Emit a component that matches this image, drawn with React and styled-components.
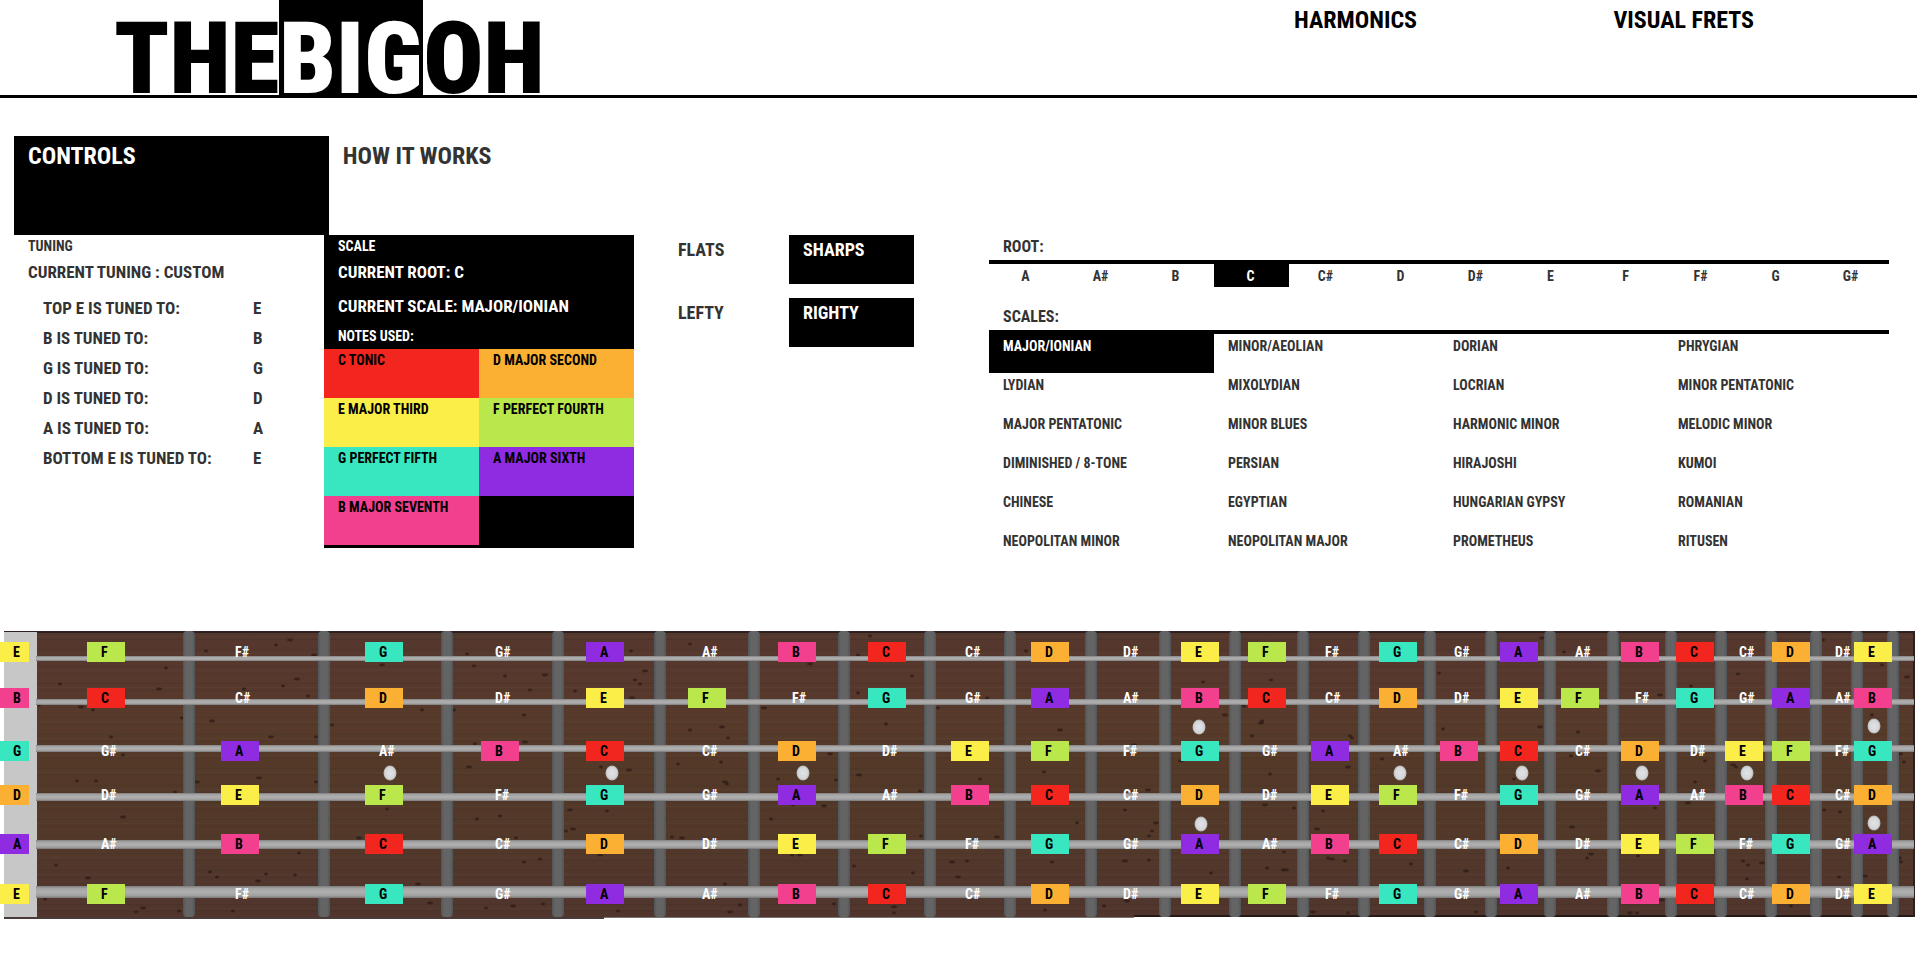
import React from "react";
import styled, { createGlobalStyle } from "styled-components";

const GlobalStyle = createGlobalStyle`
  *, *::before, *::after { box-sizing: border-box; }
  body {
    margin: 0;
    background: #fff;
    color: #333;
    font-family: "Roboto Condensed", "Liberation Sans Narrow", "Liberation Sans", sans-serif;
    font-weight: 700;
    overflow-x: hidden;
  }
  button {
    font: inherit;
    color: inherit;
    background: none;
    border: 0;
    padding: 0;
    margin: 0;
    text-align: left;
    cursor: pointer;
  }
  h1, h2, h3, p, ul, table { margin: 0; padding: 0; font-size: inherit; font-weight: inherit; }
  ul { list-style: none; }
`;

const CHROMATIC = ["A", "A#", "B", "C", "C#", "D", "D#", "E", "F", "F#", "G", "G#"];

const NOTE_COLORS = {
  C: "#f2261f",
  D: "#fbaf33",
  E: "#fcee49",
  F: "#bae74b",
  G: "#38e7bf",
  A: "#8f2be0",
  B: "#f2408f",
};

const SCALE_NOTES = [
  ["C", "TONIC"],
  ["D", "MAJOR SECOND"],
  ["E", "MAJOR THIRD"],
  ["F", "PERFECT FOURTH"],
  ["G", "PERFECT FIFTH"],
  ["A", "MAJOR SIXTH"],
  ["B", "MAJOR SEVENTH"],
];

const SCALES = [
  "MAJOR/IONIAN", "MINOR/AEOLIAN", "DORIAN", "PHRYGIAN",
  "LYDIAN", "MIXOLYDIAN", "LOCRIAN", "MINOR PENTATONIC",
  "MAJOR PENTATONIC", "MINOR BLUES", "HARMONIC MINOR", "MELODIC MINOR",
  "DIMINISHED / 8-TONE", "PERSIAN", "HIRAJOSHI", "KUMOI",
  "CHINESE", "EGYPTIAN", "HUNGARIAN GYPSY", "ROMANIAN",
  "NEOPOLITAN MINOR", "NEOPOLITAN MAJOR", "PROMETHEUS", "RITUSEN",
];

const TUNING = [
  ["TOP E", "E"],
  ["B", "B"],
  ["G", "G"],
  ["D", "D"],
  ["A", "A"],
  ["BOTTOM E", "E"],
];

/* Fretboard geometry, in units of a 1917 x 290 board. */
const BOARD_W = 1917;
const BOARD_H = 290;
const STRINGS = [
  { open: "E", top: 12, y: 26, h: 5 },
  { open: "B", top: 58, y: 69, h: 6 },
  { open: "G", top: 111, y: 115, h: 7 },
  { open: "D", top: 155, y: 163, h: 8 },
  { open: "A", top: 204, y: 210, h: 9 },
  { open: "E", top: 254, y: 256, h: 12 },
];
const NOTE_X = [
  0, 87, 221, 365, 481, 586, 688, 778, 868, 951, 1031, 1109, 1181,
  1248, 1311, 1379, 1440, 1500, 1561, 1621, 1676, 1725, 1772, 1821, 1854,
];
const FRET_X = [
  183, 318, 441, 552, 654, 748, 838, 924, 1004, 1085, 1159, 1229,
  1297, 1358, 1424, 1485, 1544, 1607, 1665, 1715, 1765, 1810, 1851, 1887,
];
const INLAYS = [
  [390, 143], [612, 143], [803, 143], [1199, 97], [1201, 194], [1400, 143],
  [1522, 143], [1642, 143], [1747, 143], [1874, 96], [1874, 193],
];
const SPECKS = [
  [290, 10], [276, 15], [206, 21], [314, 25], [166, 38], [60, 54], [159, 59], [244, 59], [283, 56], [297, 49],
  [308, 66], [39, 75], [81, 77], [93, 80], [182, 88], [212, 91], [332, 95], [111, 107], [271, 107], [316, 107],
  [123, 125], [259, 148], [96, 151], [77, 151], [197, 152], [316, 152], [175, 162], [123, 187], [387, 179], [477, 189],
  [359, 208], [299, 223], [56, 235], [88, 248], [210, 242], [217, 247], [258, 251], [266, 244], [295, 245], [418, 254],
  [45, 269], [136, 282], [143, 278], [179, 281], [233, 281], [430, 273], [467, 24], [474, 36], [382, 35], [422, 80],
  [454, 80], [469, 137], [475, 114], [505, 46], [545, 45], [530, 60], [524, 85], [525, 112], [575, 61], [631, 21],
  [645, 41], [635, 50], [640, 54], [632, 68], [690, 14], [690, 100], [722, 97], [728, 108], [601, 137], [629, 140],
  [678, 134], [721, 132], [725, 152], [727, 154], [500, 186], [570, 180], [607, 181], [566, 201], [573, 199], [516, 208],
  [672, 207], [682, 208], [524, 232], [540, 229], [600, 225], [725, 254], [740, 275], [730, 282], [543, 274], [486, 278],
  [513, 276], [618, 281], [793, 175], [824, 176], [771, 189], [792, 225], [800, 225], [854, 236], [913, 243], [952, 232],
  [870, 6], [858, 25], [810, 34], [912, 46], [858, 63], [764, 78], [886, 94], [938, 78], [830, 124], [778, 149],
  [836, 150], [859, 145], [920, 161], [921, 206], [894, 277], [894, 283], [834, 274], [958, 247], [1026, 21], [987, 68],
  [1060, 100], [1044, 142], [980, 149], [1148, 160], [1125, 180], [1077, 193], [1156, 193], [1152, 201], [1149, 206], [997, 207],
  [967, 231], [1052, 232], [1125, 231], [1149, 230], [1211, 243], [1127, 271], [1104, 276], [1045, 280], [1134, 115], [1203, 52],
  [1271, 50], [1225, 85], [1262, 91], [1252, 106], [1261, 93], [1350, 106], [1352, 108], [1348, 137], [1270, 144], [1382, 129],
  [1265, 175], [1294, 178], [1323, 181], [1317, 199], [1267, 238], [1283, 240], [1286, 240], [1284, 222], [1328, 228], [1332, 229],
  [1345, 231], [1411, 234], [1313, 282], [1348, 283], [1244, 76], [1181, 131], [1439, 43], [1443, 99], [1540, 97], [1578, 102],
  [1564, 22], [1542, 8], [1738, 44], [1691, 56], [1660, 65], [1823, 10], [1882, 35], [1907, 47], [1872, 85], [1571, 126],
  [1598, 141], [1705, 131], [1695, 152], [1733, 135], [1736, 137], [1514, 149], [1900, 124], [1904, 132], [1655, 178], [1688, 173],
  [1824, 180], [1840, 182], [1572, 197], [1633, 206], [1587, 228], [1591, 224], [1638, 226], [1508, 238], [1466, 241], [1743, 231],
  [1748, 235], [1762, 233], [1747, 249], [1839, 247], [1865, 246], [1900, 228], [1791, 276], [1630, 283], [1637, 283], [1476, 282],
  [1662, 270], [1901, 232],
];

const Header = styled.header`
  display: flex;
  height: 98px;
  border-bottom: 3px solid #000;
  color: #000;
`;

const Logo = styled.h1`
  display: flex;
  width: ${(8 / 12) * 100}%;
  padding-left: 114px;
  font-size: 100px;
  font-weight: 900;
  line-height: 118px;
`;

const LogoPart = styled.span`
  height: 95px;
  background: ${(p) => (p.$inverse ? "#000" : "transparent")};
  color: ${(p) => (p.$inverse ? "#fff" : "#000")};
`;

const Nav = styled.nav`
  display: grid;
  grid-template-columns: 1fr 1fr;
  flex: 1;
`;

const NavLink = styled.a`
  padding: 6px 16px;
  color: #000;
  font-size: 24px;
  line-height: 28px;
  text-decoration: none;
  white-space: nowrap;
`;

const Main = styled.main`
  padding: 38px 14px 0;
`;

const Tabs = styled.div`
  display: flex;
`;

const Tab = styled.button`
  width: calc(100% / 6);
  height: 99px;
  padding: 6px 14px;
  display: flex;
  align-items: flex-start;
  font-size: 24px;
  line-height: 28px;
  background: ${(p) => (p.$active ? "#000" : "#fff")};
  color: ${(p) => (p.$active ? "#fff" : "#333")};
`;

const Controls = styled.div`
  display: grid;
  grid-template-columns: 310fr 310fr 30fr 250fr 75fr 900fr 14fr;
  align-items: start;
  min-height: 333px;
`;

const Panel = styled.section`
  background: ${(p) => (p.$dark ? "#000" : "#fff")};
  color: ${(p) => (p.$dark ? "#fff" : "#333")};
  padding-bottom: 3px;
`;

const SmallTitle = styled.h2`
  padding: 2px 14px 0;
  font-size: 14px;
  line-height: 18px;
`;

const NotesTitle = styled.h3`
  padding: 0 14px;
  font-size: 14px;
  line-height: 26px;
`;

const Status = styled.p`
  padding: 0 14px;
  font-size: 17px;
  line-height: 34px;
`;

const TuningTable = styled.table`
  margin: 4px 0 0 29px;
  border-collapse: collapse;
  font-size: 17px;
  line-height: 30px;
`;

const TuningName = styled.th`
  width: 210px;
  padding: 0;
  text-align: left;
  white-space: nowrap;
`;

const TuningValue = styled.td`
  padding: 0;
`;

const Swatches = styled.ul`
  display: grid;
  grid-template-columns: 1fr 1fr;
`;

const Swatch = styled.li`
  height: 49px;
  padding: 2px 14px;
  font-size: 14px;
  line-height: 18px;
  white-space: nowrap;
  color: #000;
  background: ${(p) => p.$color};
`;

const Toggles = styled.div`
  grid-column: 4;
  display: grid;
  grid-template-columns: 1fr 1fr;
  row-gap: 14px;
`;

const Toggle = styled.button`
  height: 49px;
  padding: 5px 14px;
  display: flex;
  align-items: flex-start;
  font-size: 18px;
  line-height: 20px;
  background: ${(p) => (p.$active ? "#000" : "#fff")};
  color: ${(p) => (p.$active ? "#fff" : "#333")};
`;

const Pickers = styled.div`
  grid-column: 6;
  display: grid;
  row-gap: 18px;
`;

const PickerTitle = styled.h2`
  padding: 3px 14px;
  height: 25px;
  font-size: 16px;
  line-height: 18px;
`;

const Choices = styled.div`
  display: grid;
  grid-template-columns: repeat(${(p) => p.$columns}, 1fr);
  border-top: 4px solid #000;
`;

const Choice = styled.button`
  height: ${(p) => (p.$center ? 23 : 39)}px;
  padding: ${(p) => (p.$center ? "3px 2px 3px 0" : "3px 14px")};
  display: flex;
  align-items: flex-start;
  justify-content: ${(p) => (p.$center ? "center" : "flex-start")};
  font-size: 14px;
  line-height: 18px;
  white-space: nowrap;
  background: ${(p) => (p.$active ? "#000" : "#fff")};
  color: ${(p) => (p.$active ? "#fff" : "#333")};
`;

const Board = styled.section`
  position: relative;
  margin-top: 62px;
  height: ${BOARD_H}px;
`;

const BoardDrawing = styled.svg`
  display: block;
  width: 100%;
  height: 100%;
`;

const Note = styled.span`
  position: absolute;
  width: ${(p) => (p.$open ? 29 : 38)}px;
  height: 20px;
  padding-left: ${(p) => (p.$open ? 13 : 14)}px;
  font-size: 14px;
  line-height: 20px;
  color: ${(p) => (p.$color ? "#000" : "#fff")};
  background: ${(p) => p.$color || "transparent"};
`;

function FretboardDrawing() {
  return (
    <BoardDrawing viewBox={`0 0 ${BOARD_W} ${BOARD_H}`} preserveAspectRatio="none" aria-hidden="true">
      <defs>
        <linearGradient id="wood" x1="0" y1="0" x2="0" y2="1">
          <stop offset="0" stopColor="#54372d" />
          <stop offset="0.15" stopColor="#56382d" />
          <stop offset="0.32" stopColor="#563a2a" />
          <stop offset="0.5" stopColor="#533928" />
          <stop offset="0.62" stopColor="#523829" />
          <stop offset="0.75" stopColor="#52392a" />
          <stop offset="0.86" stopColor="#51362c" />
          <stop offset="1" stopColor="#50352d" />
        </linearGradient>
        <pattern id="grain" width="1917" height="17" patternUnits="userSpaceOnUse">
          <rect y="2" width="1917" height="1" fill="#000" opacity="0.06" />
          <rect y="6" width="1917" height="1" fill="#7a6a5c" opacity="0.1" />
          <rect y="9" width="1917" height="1" fill="#000" opacity="0.05" />
          <rect y="13" width="1917" height="1" fill="#7a3c30" opacity="0.12" />
        </pattern>
        <linearGradient id="fret" x1="0" y1="0" x2="1" y2="0">
          <stop offset="0" stopColor="#50555a" />
          <stop offset="0.25" stopColor="#646464" />
          <stop offset="0.75" stopColor="#646464" />
          <stop offset="1" stopColor="#50555a" />
        </linearGradient>
        <linearGradient id="string" x1="0" y1="0" x2="0" y2="1">
          <stop offset="0" stopColor="#7e7e7e" />
          <stop offset="0.2" stopColor="#a3a3a3" />
          <stop offset="0.5" stopColor="#b0b0b0" />
          <stop offset="0.8" stopColor="#a0a0a0" />
          <stop offset="1" stopColor="#777" />
        </linearGradient>
        <radialGradient id="inlay">
          <stop offset="0" stopColor="#e2e3e6" />
          <stop offset="0.75" stopColor="#d4d6d9" />
          <stop offset="1" stopColor="#b0aeae" />
        </radialGradient>
      </defs>
      <rect x="4" y="1" width="1911" height="286" fill="url(#wood)" />
      <rect x="4" y="1" width="1911" height="286" fill="url(#grain)" />
      <rect x="4" y="1" width="1911" height="2" fill="#2c2020" />
      <rect x="4" y="287" width="600" height="2" fill="#4a3a3a" />
      <rect x="604" y="287" width="530" height="1" fill="#777" />
      <rect x="1134" y="285" width="781" height="2" fill="#261a18" />
      <rect x="1913" y="1" width="2" height="286" fill="#2c2020" />
      {SPECKS.map(([x, y], i) => (
        <ellipse key={i} cx={x} cy={y} rx={i % 3 === 0 ? 3 : 2} ry="1.4" fill="#2c1b16" opacity="0.75" />
      ))}
      {FRET_X.map((x) => (
        <rect key={x} x={x} y="1" width="12" height="286" rx="4" fill="url(#fret)" />
      ))}
      <rect x="4" y="2" width="33" height="285" fill="#c8c7c7" />
      {STRINGS.map((s) => (
        <rect key={s.y} x="36" y={s.y} width="1878" height={s.h} fill="url(#string)" />
      ))}
      {INLAYS.map(([x, y]) => (
        <ellipse key={`${x}-${y}`} cx={x} cy={y} rx="6.5" ry="7.5" fill="url(#inlay)" />
      ))}
    </BoardDrawing>
  );
}

function Fretboard() {
  return (
    <Board aria-label="Fretboard">
      <FretboardDrawing />
      {STRINGS.map((s) =>
        NOTE_X.map((x, fret) => {
          const name = CHROMATIC[(CHROMATIC.indexOf(s.open) + fret) % 12];
          return (
            <Note
              key={`${s.y}-${fret}`}
              $open={fret === 0}
              $color={NOTE_COLORS[name]}
              style={{ left: `${(x / BOARD_W) * 100}%`, top: s.top }}
            >
              {name}
            </Note>
          );
        })
      )}
    </Board>
  );
}

export default function App() {
  return (
    <>
      <GlobalStyle />
      <Header>
        <Logo aria-label="THE BIG OH">
          <LogoPart>THE</LogoPart>
          <LogoPart $inverse>BIG</LogoPart>
          <LogoPart>OH</LogoPart>
        </Logo>
        <Nav>
          <NavLink href="#harmonics">HARMONICS</NavLink>
          <NavLink href="#visual-frets">VISUAL FRETS</NavLink>
        </Nav>
      </Header>
      <Main>
        <Tabs>
          <Tab type="button" $active>CONTROLS</Tab>
          <Tab type="button">HOW IT WORKS</Tab>
        </Tabs>
        <Controls>
          <Panel>
            <SmallTitle>TUNING</SmallTitle>
            <Status>CURRENT TUNING : CUSTOM</Status>
            <TuningTable>
              <tbody>
                {TUNING.map(([name, note]) => (
                  <tr key={name}>
                    <TuningName scope="row">{name} IS TUNED TO:</TuningName>
                    <TuningValue>{note}</TuningValue>
                  </tr>
                ))}
              </tbody>
            </TuningTable>
          </Panel>
          <Panel $dark>
            <SmallTitle>SCALE</SmallTitle>
            <Status>CURRENT ROOT: C</Status>
            <Status>CURRENT SCALE: MAJOR/IONIAN</Status>
            <NotesTitle>NOTES USED:</NotesTitle>
            <Swatches>
              {SCALE_NOTES.map(([note, degree]) => (
                <Swatch key={note} $color={NOTE_COLORS[note]}>{note} {degree}</Swatch>
              ))}
            </Swatches>
          </Panel>
          <Toggles>
            <Toggle type="button">FLATS</Toggle>
            <Toggle type="button" $active>SHARPS</Toggle>
            <Toggle type="button">LEFTY</Toggle>
            <Toggle type="button" $active>RIGHTY</Toggle>
          </Toggles>
          <Pickers>
            <section>
              <PickerTitle>ROOT:</PickerTitle>
              <Choices $columns={12}>
                {CHROMATIC.map((n) => (
                  <Choice key={n} type="button" $center $active={n === "C"}>{n}</Choice>
                ))}
              </Choices>
            </section>
            <section>
              <PickerTitle>SCALES:</PickerTitle>
              <Choices $columns={4}>
                {SCALES.map((n, i) => (
                  <Choice key={n} type="button" $active={i === 0}>{n}</Choice>
                ))}
              </Choices>
            </section>
          </Pickers>
        </Controls>
      </Main>
      <Fretboard />
    </>
  );
}
